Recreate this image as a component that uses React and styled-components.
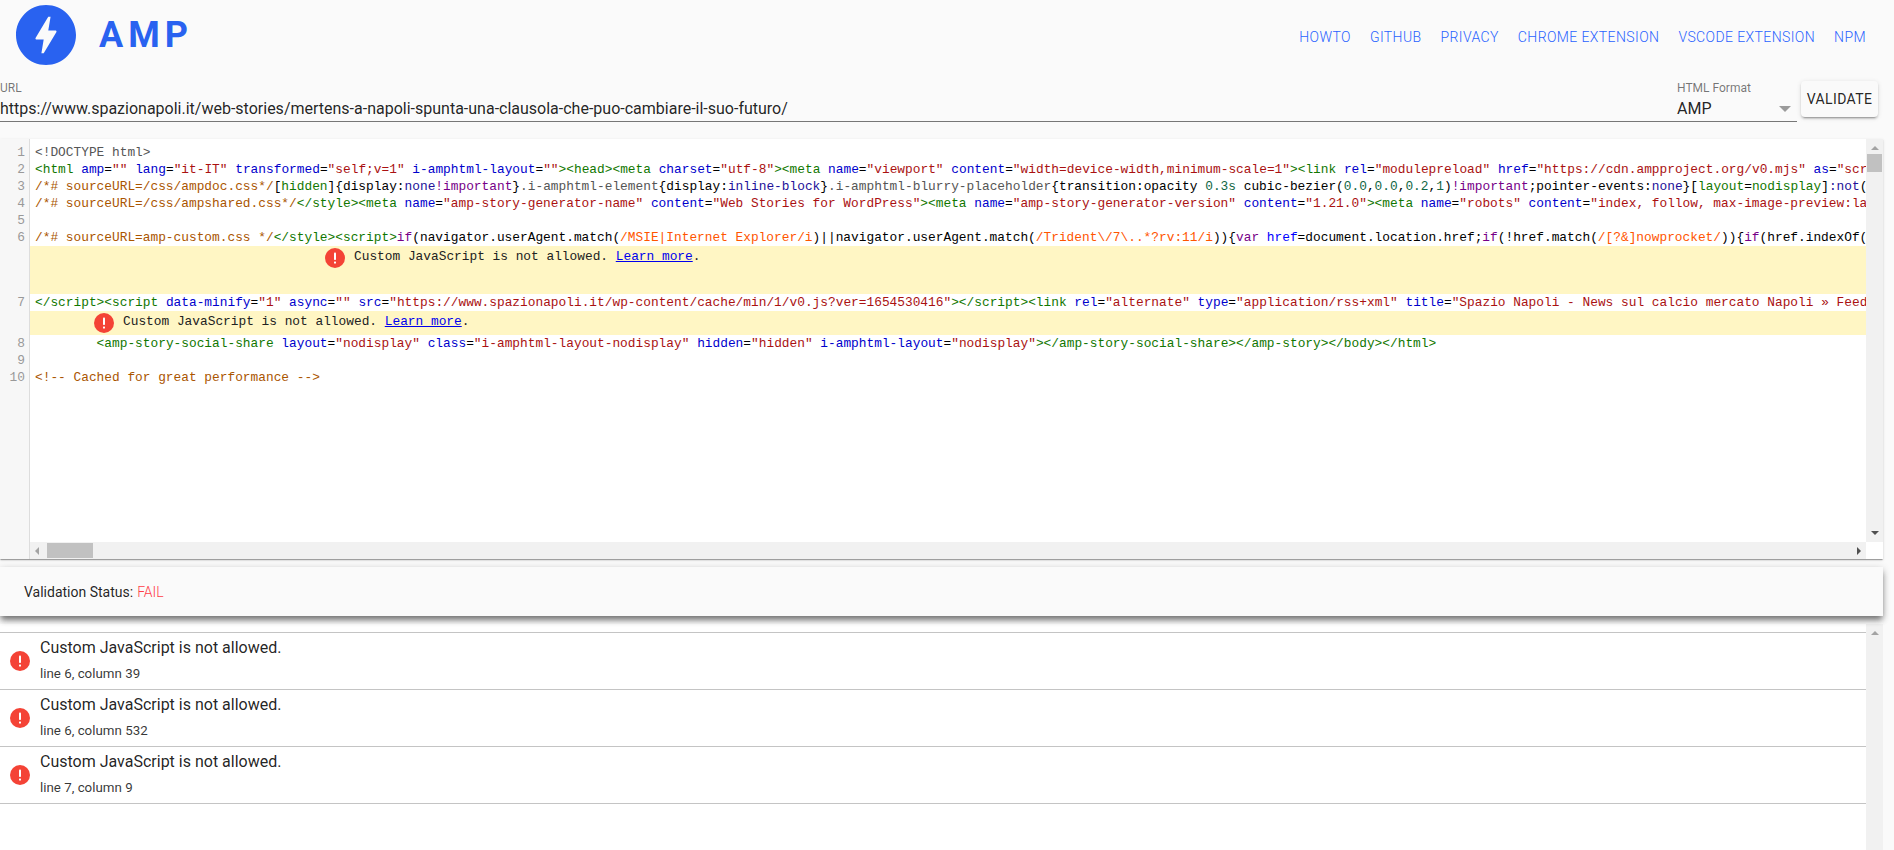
import React from 'react';
import styled, { createGlobalStyle } from 'styled-components';

const GlobalStyle = createGlobalStyle`
  html, body {
    margin: 0;
    height: 100%;
    overflow: hidden;
    background: #fafafa;
    font-family: Roboto, "Liberation Sans", sans-serif;
    color: rgba(0, 0, 0, 0.87);
  }
`;

const Page = styled.div`
  height: 850px;
  display: flex;
  flex-direction: column;
`;

const Header = styled.header`
  height: 70px;
  display: flex;
  align-items: flex-start;
  justify-content: space-between;
  padding: 5px 28px 0 16px;
  box-sizing: border-box;
`;

const Brand = styled.div`
  display: flex;
  align-items: center;
  gap: 23px;
  color: #2962f0;
`;

const BrandName = styled.span`
  font-size: 36px;
  font-weight: 700;
  letter-spacing: 5px;
  line-height: 60px;
`;

const Nav = styled.nav`
  display: flex;
  gap: 19px;
  padding-top: 23px;
`;

const NavLink = styled.a`
  font-size: 14px;
  font-weight: 300;
  line-height: 18px;
  letter-spacing: 0.4px;
  text-transform: uppercase;
  color: #2962ff;
  text-decoration: none;
`;

const FormRow = styled.div`
  display: flex;
  align-items: flex-start;
  padding: 11px 16px 0 0;
  height: 51px;
  box-sizing: border-box;
`;

const Field = styled.div`
  display: flex;
  flex-direction: column;
  flex: ${(p) => (p.$grow ? 1 : '0 0 120px')};
  height: 40px;
  border-bottom: 1px solid #777;
  padding-left: ${(p) => (p.$grow ? 0 : '10px')};
`;

const FieldLabel = styled.label`
  font-size: 12px;
  line-height: 14px;
  color: rgba(0, 0, 0, 0.54);
`;

const UrlInput = styled.input`
  border: 0;
  outline: 0;
  padding: 0;
  margin-top: 2px;
  background: transparent;
  font: 400 16px/24px Roboto, sans-serif;
  color: rgba(0, 0, 0, 0.87);
`;

const SelectValue = styled.div`
  display: flex;
  align-items: center;
  justify-content: space-between;
  margin-top: 2px;
  padding-right: 6px;
  font-size: 16px;
  line-height: 24px;
`;

const Caret = styled.span`
  width: 0;
  height: 0;
  border-left: 6px solid transparent;
  border-right: 6px solid transparent;
  border-top: 6px solid rgba(0, 0, 0, 0.38);
`;

const ValidateButton = styled.button`
  width: 77px;
  height: 36px;
  margin: 0 0 0 4px;
  border: 0;
  border-radius: 4px;
  background: #fafafa;
  padding: 0;
  font: 400 14px/36px Roboto, sans-serif;
  letter-spacing: 0.4px;
  color: rgba(0, 0, 0, 0.87);
  box-shadow: 0 3px 1px -2px rgba(0, 0, 0, 0.2), 0 2px 2px rgba(0, 0, 0, 0.14), 0 1px 5px rgba(0, 0, 0, 0.12);
`;

const EditorPanel = styled.section`
  margin: 18px 11px 0 0;
  height: 420px;
  flex: none;
  display: flex;
  flex-direction: column;
  background: #fff;
  box-shadow: 0 2px 1px -1px rgba(0, 0, 0, 0.2), 0 1px 1px rgba(0, 0, 0, 0.14), 0 1px 3px rgba(0, 0, 0, 0.12);
`;

const EditorBody = styled.div`
  flex: 1;
  min-height: 0;
  display: flex;
`;

const CodeColumn = styled.div`
  flex: 1;
  min-width: 0;
  display: flex;
  flex-direction: column;
  overflow: hidden;
  font-family: "Liberation Mono", monospace;
  font-size: 12.83px;
  line-height: 17px;
  color: #000;
`;

const GutterCell = styled.div`
  flex: 0 0 25px;
  width: 25px;
  padding-right: 4px;
  text-align: right;
  color: #999;
  background: #f7f7f7;
  border-right: 1px solid #ddd;
`;

const CodeRow = styled.div`
  display: flex;
  flex: ${(p) => (p.$fill ? 1 : 'none')};
  height: ${(p) => (p.$h ? `${p.$h}px` : 'auto')};
`;

const CodeText = styled.div`
  padding-left: 5px;
  white-space: pre;
`;

const COLORS = {
  tag: '#117700',
  attr: '#0000cc',
  str: '#aa1111',
  comment: '#aa5500',
  meta: '#555555',
  kw: '#770088',
  atom: '#221199',
  num: '#116644',
  regex: '#ff5500',
  def: '#0000ff',
  qual: '#555555',
};

const Tok = styled.span`
  color: ${(p) => COLORS[p.$kind] || 'inherit'};
`;

const Widget = styled.div`
  flex: 1;
  display: flex;
  align-items: flex-start;
  gap: 9px;
  padding: 2px 0 0 ${(p) => p.$indent}px;
  background: #fff6c4;
  color: #212121;
  white-space: pre;
`;

const LearnMore = styled.a`
  color: #0000ee;
  text-decoration: underline;
`;

const VTrack = styled.div`
  flex: 0 0 17px;
  display: flex;
  flex-direction: column;
  align-items: center;
  background: #f1f1f1;
`;

const VThumb = styled.div`
  width: 15px;
  height: 18px;
  margin-top: 4px;
  background: #c1c1c1;
`;

const Spacer = styled.div`
  flex: 1;
`;

const Arrow = styled.span`
  width: 0;
  height: 0;
  flex: none;
  border-style: solid;
  border-color: transparent;
  border-width: 4px;
  ${(p) => p.$dir === 'up' && `border-top-width: 0; border-bottom: 4px solid ${p.$color || '#a3a3a3'}; margin-top: 7px;`}
  ${(p) => p.$dir === 'down' && `border-bottom-width: 0; border-top: 4px solid ${p.$color || '#505050'}; margin-bottom: 7px;`}
  ${(p) => p.$dir === 'left' && `border-left-width: 0; border-right: 4px solid ${p.$color || '#a3a3a3'}; margin-left: 5px;`}
  ${(p) => p.$dir === 'right' && `border-right-width: 0; border-left: 4px solid ${p.$color || '#505050'}; margin-right: 5px;`}
`;

const HBar = styled.div`
  flex: 0 0 17px;
  display: flex;
  font-size: 0;
`;

const HTrack = styled.div`
  flex: 1;
  display: flex;
  align-items: center;
  background: #f1f1f1;
`;

const HThumb = styled.div`
  width: 46px;
  height: 15px;
  margin-left: 8px;
  background: #c1c1c1;
`;

const Corner = styled.div`
  flex: 0 0 17px;
  background: #fff;
`;

const StatusCard = styled.section`
  position: relative;
  z-index: 1;
  flex: none;
  height: 49px;
  margin: 8px 11px 0 0;
  padding-left: 24px;
  display: flex;
  align-items: center;
  font-size: 14px;
  background: #fafafa;
  box-shadow: 0 5px 6px -1px rgba(0, 0, 0, 0.45), 0 2px 8px rgba(0, 0, 0, 0.2);
`;

const StatusFail = styled.span`
  color: #ff3d47;
  font-weight: 300;
  margin-left: 4px;
`;

const Results = styled.section`
  flex: 1;
  min-height: 0;
  margin: 8px 11px 0 0;
  display: flex;
  background: #fff;
`;

const ResultList = styled.ul`
  flex: 1;
  margin: 0;
  padding: 8px 0 0;
  list-style: none;
`;

const ResultItem = styled.li`
  height: 56px;
  display: flex;
  align-items: center;
  gap: 10px;
  padding-left: 10px;
  border-top: 1px solid #c4c4c4;
  &:last-child {
    border-bottom: 1px solid #c4c4c4;
  }
`;

const ResultBody = styled.div`
  display: flex;
  flex-direction: column;
`;

const ResultTitle = styled.span`
  font-size: 16px;
  line-height: 20px;
  margin-top: -4px;
`;

const ResultPos = styled.span`
  font-size: 13.33px;
  line-height: 14px;
  margin-top: 9px;
  color: rgba(0, 0, 0, 0.8);
`;

const AmpLogo = () => (
  <svg width="60" height="60" viewBox="0 0 256 256" fill="currentColor">
    <path
      fillRule="evenodd"
      d="M171.887 116.28l-53.696 89.36h-9.728l9.617-58.227-30.2.047c-2.684 0-4.855-2.172-4.855-4.855 0-1.152 1.07-3.102 1.07-3.102l53.52-89.254 9.9.043-9.86 58.317 30.413-.043c2.684 0 4.855 2.172 4.855 4.855 0 1.088-.427 2.044-1.033 2.854l.004.004zM128 0C57.306 0 0 57.3 0 128s57.306 128 128 128 128-57.306 128-128S198.7 0 128 0z"
    />
  </svg>
);

const ErrorIcon = () => (
  <svg width="20" height="20" viewBox="0 0 20 20" style={{ flex: 'none' }}>
    <circle cx="10" cy="10" r="10" fill="#f44336" />
    <rect x="9" y="4.5" width="2" height="7.5" rx="0.8" fill="#fff" />
    <rect x="9" y="13.5" width="2" height="2" rx="0.5" fill="#fff" />
  </svg>
);

const attr = (name, value) => [['', ' '], ['attr', name], ['', '='], ['str', `"${value}"`]];

const codeLines = [
  { n: 1, toks: [['meta', '<!DOCTYPE html>']] },
  {
    n: 2,
    toks: [
      ['tag', '<html'], ...attr('amp', ''), ...attr('lang', 'it-IT'), ...attr('transformed', 'self;v=1'),
      ...attr('i-amphtml-layout', ''), ['tag', '><head><meta'], ...attr('charset', 'utf-8'), ['tag', '><meta'],
      ...attr('name', 'viewport'), ...attr('content', 'width=device-width,minimum-scale=1'), ['tag', '><link'],
      ...attr('rel', 'modulepreload'), ...attr('href', 'https://cdn.ampproject.org/v0.mjs'), ...attr('as', 'script'),
    ],
  },
  {
    n: 3,
    toks: [
      ['comment', '/*# sourceURL=/css/ampdoc.css*/'], ['', '['], ['tag', 'hidden'], ['', ']{display:'], ['atom', 'none'],
      ['kw', '!important'], ['', '}'], ['qual', '.i-amphtml-element'], ['', '{display:'], ['atom', 'inline-block'], ['', '}'],
      ['qual', '.i-amphtml-blurry-placeholder'], ['', '{transition:opacity '], ['num', '0.3s'], ['', ' cubic-bezier('],
      ['num', '0.0'], ['', ','], ['num', '0.0'], ['', ','], ['num', '0.2'], ['', ','], ['num', '1'], ['', ')'],
      ['kw', '!important'], ['', ';pointer-events:'], ['atom', 'none'], ['', '}['], ['tag', 'layout'], ['', '='],
      ['tag', 'nodisplay'], ['', ']'], ['atom', ':not'], ['', '('],
    ],
  },
  {
    n: 4,
    toks: [
      ['comment', '/*# sourceURL=/css/ampshared.css*/'], ['tag', '</style><meta'], ...attr('name', 'amp-story-generator-name'),
      ...attr('content', 'Web Stories for WordPress'), ['tag', '><meta'], ...attr('name', 'amp-story-generator-version'),
      ...attr('content', '1.21.0'), ['tag', '><meta'], ...attr('name', 'robots'),
      ...attr('content', 'index, follow, max-image-preview:large'),
    ],
  },
  { n: 5, toks: [['', ' ']] },
  {
    n: 6,
    toks: [
      ['comment', '/*# sourceURL=amp-custom.css */'], ['tag', '</style><script>'], ['kw', 'if'],
      ['', '(navigator.userAgent.match('], ['regex', '/MSIE|Internet Explorer/i'], ['', ')||navigator.userAgent.match('],
      ['regex', '/Trident\\/7\\..*?rv:11/i'], ['', ')){'], ['kw', 'var'], ['', ' '], ['def', 'href'],
      ['', '=document.location.href;'], ['kw', 'if'], ['', '(!href.match('], ['regex', '/[?&]nowprocket/'], ['', ')){'],
      ['kw', 'if'], ['', '(href.indexOf('],
    ],
    widget: { indent: 295, h: 48 },
  },
  {
    n: 7,
    toks: [
      ['tag', '</script><script'], ...attr('data-minify', '1'), ...attr('async', ''),
      ...attr('src', 'https://www.spazionapoli.it/wp-content/cache/min/1/v0.js?ver=1654530416'), ['tag', '></script><link'],
      ...attr('rel', 'alternate'), ...attr('type', 'application/rss+xml'),
      ...attr('title', 'Spazio Napoli - News sul calcio mercato Napoli » Feed'),
    ],
    widget: { indent: 64, h: 24 },
  },
  {
    n: 8,
    toks: [
      ['', '        '], ['tag', '<amp-story-social-share'], ...attr('layout', 'nodisplay'),
      ...attr('class', 'i-amphtml-layout-nodisplay'), ...attr('hidden', 'hidden'), ...attr('i-amphtml-layout', 'nodisplay'),
      ['tag', '></amp-story-social-share></amp-story></body></html>'],
    ],
  },
  { n: 9, toks: [['', ' ']] },
  { n: 10, toks: [['comment', '<!-- Cached for great performance -->']] },
];

const navItems = ['Howto', 'Github', 'Privacy', 'Chrome Extension', 'VSCode Extension', 'NPM'];

const errors = ['line 6, column 39', 'line 6, column 532', 'line 7, column 9'];

const App = () => (
  <Page>
    <GlobalStyle />
    <Header>
      <Brand>
        <AmpLogo />
        <BrandName>AMP</BrandName>
      </Brand>
      <Nav>
        {navItems.map((item) => (
          <NavLink key={item} href="#">{item}</NavLink>
        ))}
      </Nav>
    </Header>

    <FormRow>
      <Field $grow>
        <FieldLabel>URL</FieldLabel>
        <UrlInput readOnly value="https://www.spazionapoli.it/web-stories/mertens-a-napoli-spunta-una-clausola-che-puo-cambiare-il-suo-futuro/" />
      </Field>
      <Field>
        <FieldLabel>HTML Format</FieldLabel>
        <SelectValue>AMP<Caret /></SelectValue>
      </Field>
      <ValidateButton>VALIDATE</ValidateButton>
    </FormRow>

    <EditorPanel>
      <EditorBody>
        <CodeColumn>
          <CodeRow $h={5}><GutterCell /></CodeRow>
          {codeLines.map((line) => (
            <React.Fragment key={line.n}>
              <CodeRow>
                <GutterCell>{line.n}</GutterCell>
                <CodeText>
                  {line.toks.map(([kind, text], i) => (
                    <Tok key={i} $kind={kind}>{text}</Tok>
                  ))}
                </CodeText>
              </CodeRow>
              {line.widget && (
                <CodeRow $h={line.widget.h}>
                  <GutterCell />
                  <Widget $indent={line.widget.indent}>
                    <ErrorIcon />
                    <span>Custom JavaScript is not allowed. <LearnMore href="#">Learn more</LearnMore>.</span>
                  </Widget>
                </CodeRow>
              )}
            </React.Fragment>
          ))}
          <CodeRow $fill><GutterCell /></CodeRow>
        </CodeColumn>
        <VTrack>
          <Arrow $dir="up" />
          <VThumb />
          <Spacer />
          <Arrow $dir="down" />
        </VTrack>
      </EditorBody>
      <HBar>
        <GutterCell />
        <HTrack>
          <Arrow $dir="left" />
          <HThumb />
          <Spacer />
          <Arrow $dir="right" />
        </HTrack>
        <Corner />
      </HBar>
    </EditorPanel>

    <StatusCard>
      Validation Status:<StatusFail>FAIL</StatusFail>
    </StatusCard>

    <Results>
      <ResultList>
        {errors.map((pos) => (
          <ResultItem key={pos}>
            <ErrorIcon />
            <ResultBody>
              <ResultTitle>Custom JavaScript is not allowed.</ResultTitle>
              <ResultPos>{pos}</ResultPos>
            </ResultBody>
          </ResultItem>
        ))}
      </ResultList>
      <VTrack>
        <Arrow $dir="up" />
      </VTrack>
    </Results>
  </Page>
);

export default App;
